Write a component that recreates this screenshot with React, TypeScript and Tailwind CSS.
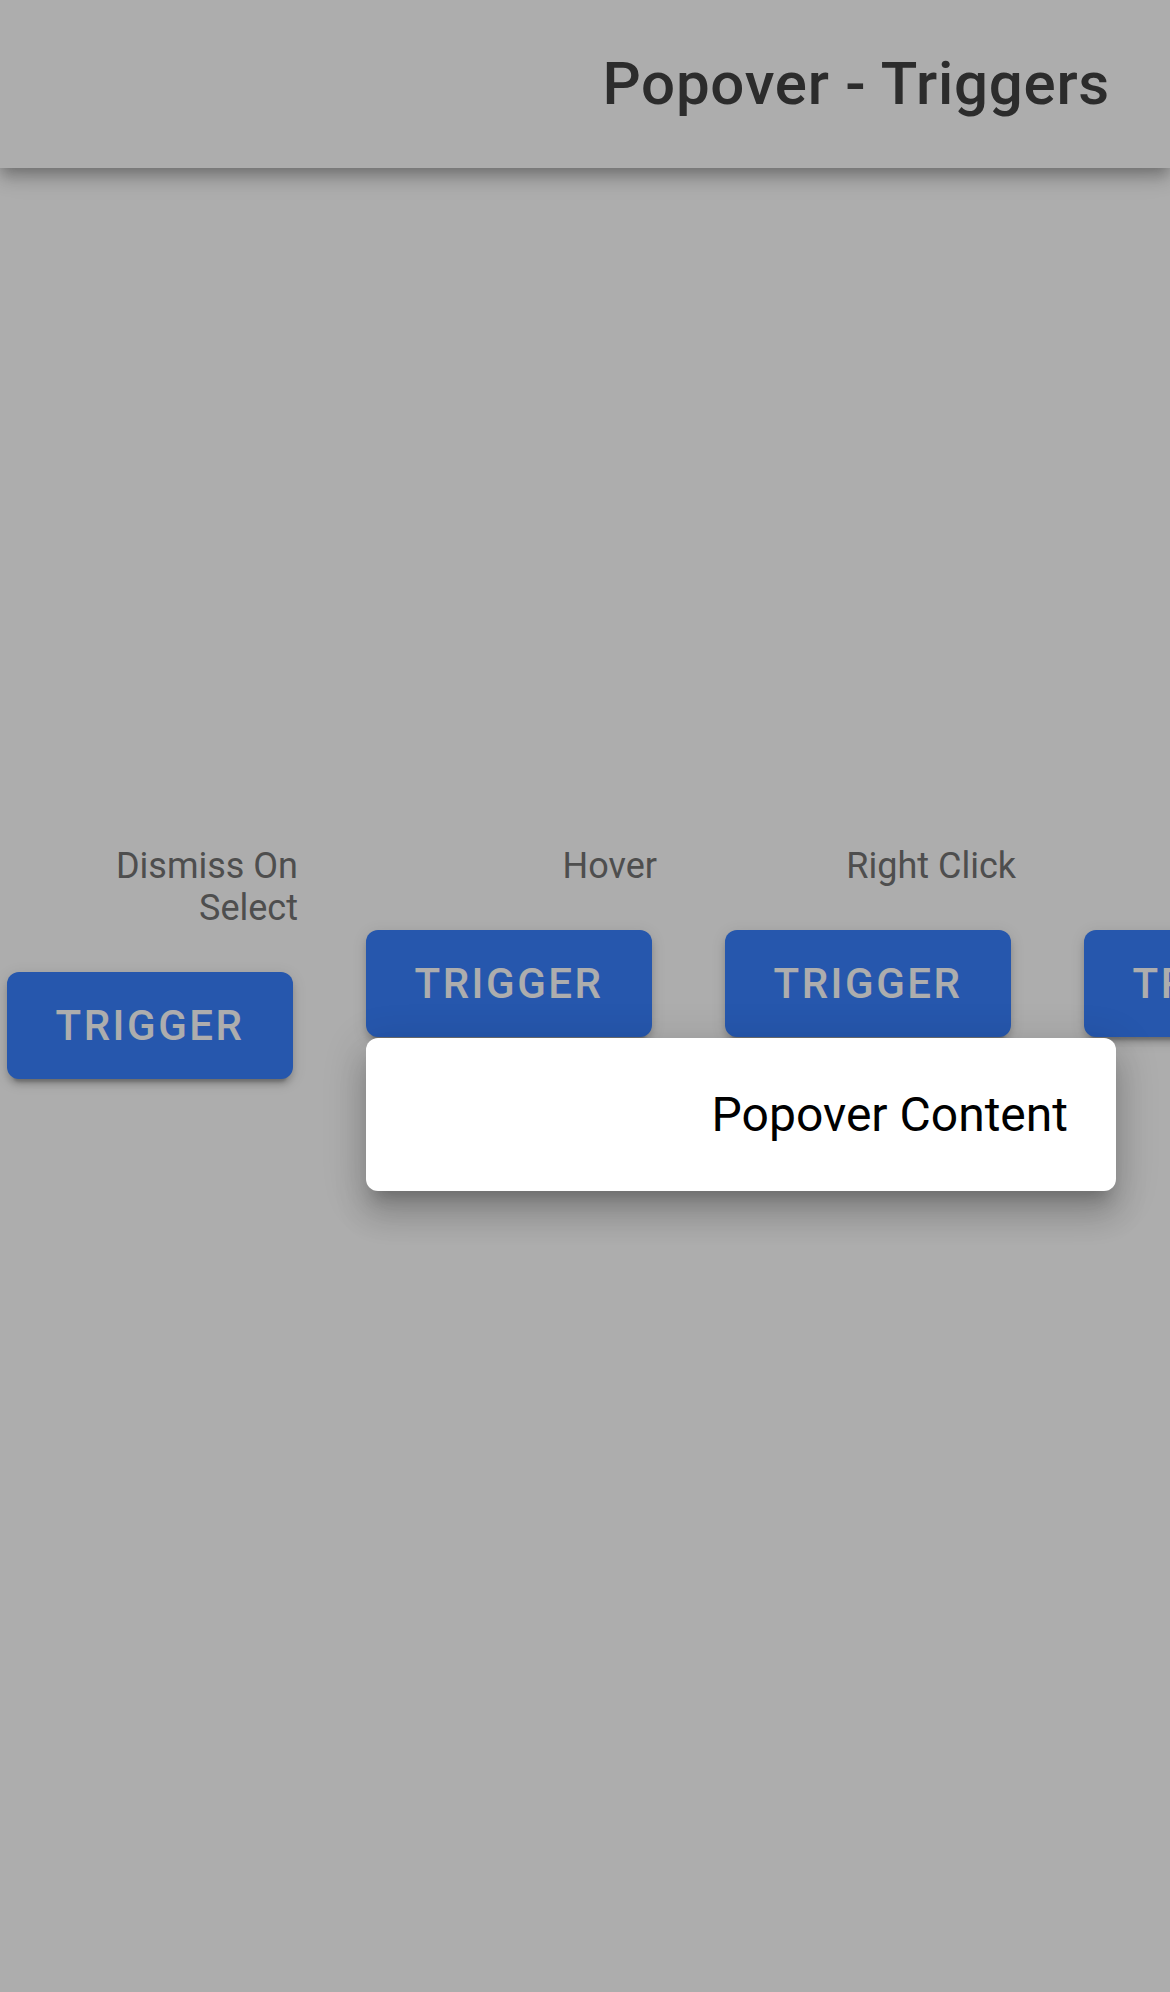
import React from "react";

function Trigger({ label }: { label: string }) {
  return (
    <div className="flex w-[299px] shrink-0 flex-col items-end">
      <div className="h-auto min-h-[42px] max-w-[220px] pr-[2px] text-right text-[36px] leading-[42px] text-[#737373]">
        {label}
      </div>
      <button className="mt-[43px] mr-[7px] flex h-[107px] w-[286px] items-center justify-center rounded-[12px] bg-[#3880ff] text-[42px] font-medium uppercase tracking-[0.06em] text-white shadow-[0_9px_3px_-6px_rgba(0,0,0,0.2),0_6px_6px_0_rgba(0,0,0,0.14),0_3px_15px_0_rgba(0,0,0,0.12)]">
        Trigger
      </button>
    </div>
  );
}

export default function App() {
  return (
    <div className="relative min-h-[1992px] overflow-hidden bg-white font-['Roboto','Liberation_Sans',sans-serif]">
      <header className="relative z-10 flex h-[168px] items-center justify-end bg-white px-[60px] shadow-[0_6px_12px_-3px_rgba(0,0,0,0.2),0_12px_15px_0_rgba(0,0,0,0.14),0_3px_30px_0_rgba(0,0,0,0.12)]">
        <h1 className="text-[60px] font-medium leading-[70px] tracking-[0.0125em] text-[#424242]">
          Popover - Triggers
        </h1>
      </header>
      <main className="flex gap-[60px] pl-[1px] pt-[677px]">
        <Trigger label="Dismiss On Select" />
        <Trigger label="Hover" />
        <Trigger label="Right Click" />
        <Trigger label="" />
      </main>
      <div className="absolute inset-0 z-20 bg-black/[0.32]" />
      <div className="absolute left-[366px] top-[1038px] z-30 w-[750px] rounded-[12px] bg-white px-[48px] py-[48px] text-right text-[48px] leading-[57px] text-black shadow-[0_15px_15px_-9px_rgba(0,0,0,0.2),0_24px_30px_3px_rgba(0,0,0,0.14),0_9px_42px_6px_rgba(0,0,0,0.12)]">
        Popover Content
      </div>
    </div>
  );
}
